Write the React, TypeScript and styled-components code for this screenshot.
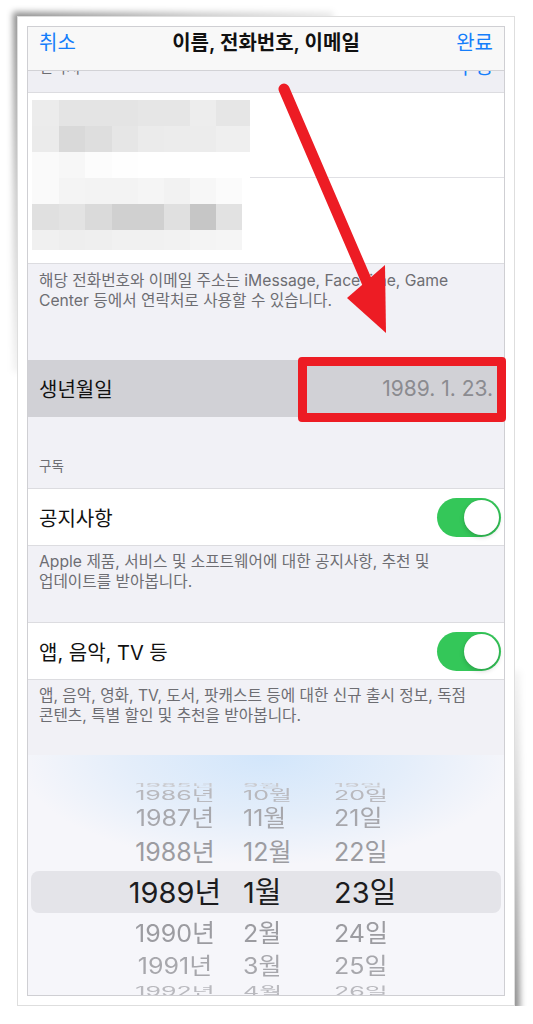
import React from 'react';
import styled, { createGlobalStyle } from 'styled-components';

const GlobalStyle = createGlobalStyle`
  html {
    background: #ffffff;
  }
  body {
    margin: 0;
    padding: 0;
    font-family: Inter, "Noto Sans CJK KR", sans-serif;
    -webkit-font-smoothing: antialiased;
  }
`;

const MOSAIC: string[][] = [
  ['#ececec', '#e4e4e4', '#e4e4e4', '#e4e4e4', '#e6e6e6', '#e6e6e6', '#ededed', '#e6e6e6'],
  ['#ebebeb', '#d9d9d9', '#dedede', '#e6e6e6', '#ebebeb', '#ececec', '#ececec', '#efefef'],
  ['#fafafa', '#f7f7f7', '#fcfcfc', '#fefefe', '#ffffff', '#ffffff', '#ffffff', '#ffffff'],
  ['#fafafa', '#f4f4f4', '#f3f3f3', '#f3f3f3', '#f5f5f5', '#f2f2f2', '#f7f7f7', '#fbfbfb'],
  ['#e0e0e0', '#e3e3e3', '#dadada', '#d0d0d0', '#d0d0d0', '#e0e0e0', '#c6c6c6', '#e2e2e2'],
  ['#f0f0f0', '#eeeeee', '#efefef', '#f1f1f1', '#f1f1f1', '#f2f2f2', '#f4f4f4', '#f5f5f5'],
];
const COL_X = [0, 27, 53, 80, 106, 132, 158, 184];
const ROW_Y = [0, 26, 52, 78, 104, 130];
const ROW_H = [26, 26, 26, 26, 26, 20];

interface WheelItem {
  year: string;
  month: string;
  day: string;
  h: number;
  sy: number;
  color: string;
  selected?: boolean;
}

const WHEEL: WheelItem[] = [
  { year: '1985년', month: '9월', day: '19일', h: 10, sy: 0.18, color: '#cacace' },
  { year: '1986년', month: '10월', day: '20일', h: 21, sy: 0.55, color: '#b9b9be' },
  { year: '1987년', month: '11월', day: '21일', h: 29, sy: 0.9, color: '#a7a7ac' },
  { year: '1988년', month: '12월', day: '22일', h: 38, sy: 1.0, color: '#9c9ca1' },
  { year: '1989년', month: '1월', day: '23일', h: 42, sy: 1.0, color: '#1c1c1e', selected: true },
  { year: '1990년', month: '2월', day: '24일', h: 40, sy: 0.98, color: '#9c9ca1' },
  { year: '1991년', month: '3월', day: '25일', h: 26, sy: 0.9, color: '#a7a7ac' },
  { year: '1992년', month: '4월', day: '26일', h: 22, sy: 0.5, color: '#b9b9be' },
];

const Mosaic = () => (
  <MosaicSvg width="218" height="150" viewBox="0 0 218 150">
    {MOSAIC.map((row, r) =>
      row.map((fill, c) => {
        const w = c === 7 ? (r < 3 ? 34 : 26) : COL_X[c + 1] - COL_X[c];
        return (
          <rect
            key={`${r}-${c}`}
            x={COL_X[c]}
            y={ROW_Y[r]}
            width={w}
            height={ROW_H[r]}
            fill={fill}
          />
        );
      })
    )}
  </MosaicSvg>
);

const Arrow = () => (
  <ArrowSvg viewBox="0 0 498 990" width="498" height="990">
    <line
      x1="266"
      y1="72"
      x2="352"
      y2="272"
      stroke="#ed1c24"
      strokeWidth="11"
      strokeLinecap="round"
    />
    <polygon points="329,281 367,248 368,316" fill="#ed1c24" />
  </ArrowSvg>
);

const App = () => {
  return (
    <>
      <GlobalStyle />
      <Page>
        <Card>
          <Screen>
            <NavBar>
              <NavButton>취소</NavButton>
              <NavTitle>이름, 전화번호, 이메일</NavTitle>
              <NavButton $right>완료</NavButton>
            </NavBar>
            <HiddenHeader>
              <HiddenLabel>연락처</HiddenLabel>
              <HiddenAction>수정</HiddenAction>
            </HiddenHeader>
            <ContactGroup>
              <ContactCell />
              <ContactCell $last />
              <Mosaic />
            </ContactGroup>
            <Footer $pt={7} $pb={49}>
              해당 전화번호와 이메일 주소는 iMessage, FaceTime, Game
              <br />
              Center 등에서 연락처로 사용할 수 있습니다.
            </Footer>
            <DateRow>
              <Label>생년월일</Label>
              <Value>1989. 1. 23.</Value>
            </DateRow>
            <SectionHeader>구독</SectionHeader>
            <Group>
              <SwitchCell>
                <Label>공지사항</Label>
                <Toggle>
                  <Knob />
                </Toggle>
              </SwitchCell>
            </Group>
            <Footer $pt={6} $pb={30}>
              Apple 제품, 서비스 및 소프트웨어에 대한 공지사항, 추천 및
              <br />
              업데이트를 받아봅니다.
            </Footer>
            <Group>
              <SwitchCell>
                <Label>앱, 음악, TV 등</Label>
                <Toggle>
                  <Knob />
                </Toggle>
              </SwitchCell>
            </Group>
            <Footer $pt={6} $pb={0}>
              앱, 음악, 영화, TV, 도서, 팟캐스트 등에 대한 신규 출시 정보, 독점
              <br />
              콘텐츠, 특별 할인 및 추천을 받아봅니다.
            </Footer>
            <Picker>
              {WHEEL.map((item) => (
                <WheelRow key={item.year} $h={item.h} $selected={item.selected}>
                  <span />
                  <WheelText
                    $center
                    $selected={item.selected}
                    style={{ color: item.color, transform: `scaleY(${item.sy})` }}
                  >
                    {item.year}
                  </WheelText>
                  <WheelText
                    $pad
                    $selected={item.selected}
                    style={{ color: item.color, transform: `scaleY(${item.sy})` }}
                  >
                    {item.month}
                  </WheelText>
                  <WheelText
                    $selected={item.selected}
                    style={{ color: item.color, transform: `scaleY(${item.sy})` }}
                  >
                    {item.day}
                  </WheelText>
                </WheelRow>
              ))}
            </Picker>
          </Screen>
          <RedBox />
          <Arrow />
        </Card>
      </Page>
    </>
  );
};

export default App;

const Page = styled.div`
  position: relative;
  z-index: 0;
  padding: 16px 0 0 17px;
`;

const Card = styled.div`
  position: relative;
  box-sizing: border-box;
  width: 498px;
  height: 990px;
  padding: 9px;
  border: 1px solid #dedede;
  background: #ffffff;

  &::before {
    content: '';
    position: absolute;
    top: -5px;
    left: -5px;
    width: 320px;
    height: 360px;
    background: linear-gradient(
      135deg,
      rgba(0, 0, 0, 0.45) 0%,
      rgba(0, 0, 0, 0.2) 28%,
      rgba(0, 0, 0, 0) 62%
    );
    filter: blur(3px);
    z-index: -1;
  }

  &::after {
    content: '';
    position: absolute;
    right: -6px;
    bottom: -6px;
    width: 290px;
    height: 340px;
    background: linear-gradient(
      315deg,
      rgba(0, 0, 0, 0.45) 0%,
      rgba(0, 0, 0, 0.2) 28%,
      rgba(0, 0, 0, 0) 62%
    );
    filter: blur(3px);
    z-index: -1;
  }
`;

const Screen = styled.div`
  box-sizing: border-box;
  height: 100%;
  display: flex;
  flex-direction: column;
  border: 1px solid #cfcfd3;
  background: #f1f1f6;
  overflow: hidden;
`;

const NavBar = styled.div`
  flex: none;
  height: 44px;
  display: grid;
  grid-template-columns: 1fr auto 1fr;
  align-items: start;
  padding: 3px 11px 0;
  box-sizing: border-box;
  background: #f8f8f8;
  border-bottom: 1px solid #d2d2d6;
`;

const NavButton = styled.div<{ $right?: boolean }>`
  font-size: 20px;
  line-height: 26px;
  color: #157efb;
  text-align: ${(p) => (p.$right ? 'right' : 'left')};
`;

const NavTitle = styled.div`
  font-size: 20px;
  line-height: 26px;
  font-weight: 600;
  color: #111111;
`;

const HiddenHeader = styled.div`
  flex: none;
  height: 21px;
  display: flex;
  justify-content: space-between;
  align-items: flex-start;
  padding: 0 11px;
  overflow: hidden;
  background: #efeff4;
`;

const HiddenLabel = styled.span`
  margin-top: -12px;
  font-size: 15px;
  line-height: 18px;
  color: #6d6d72;
`;

const HiddenAction = styled.span`
  margin-top: -16px;
  font-size: 20px;
  line-height: 24px;
  color: #157efb;
`;

const ContactGroup = styled.div`
  position: relative;
  flex: none;
  background: #ffffff;
  border-top: 1px solid #dcdce0;
  border-bottom: 1px solid #dcdce0;
`;

const ContactCell = styled.div<{ $last?: boolean }>`
  height: ${(p) => (p.$last ? 85 : 84)}px;
  margin-left: ${(p) => (p.$last ? 0 : 11)}px;
  border-bottom: ${(p) => (p.$last ? 'none' : '1px solid #e0e0e4')};
`;

const MosaicSvg = styled.svg`
  position: absolute;
  top: 7px;
  left: 4px;
`;

const Footer = styled.div<{ $pt: number; $pb: number }>`
  flex: none;
  padding: ${(p) => p.$pt}px 11px ${(p) => p.$pb}px;
  font-size: 15.7px;
  line-height: 20px;
  white-space: nowrap;
  color: #6d6d72;
`;

const Label = styled.span`
  font-size: 20px;
  color: #111111;
`;

const Value = styled.span`
  font-size: 21px;
  color: #8b8b90;
`;

const DateRow = styled.div`
  flex: none;
  height: 57px;
  display: flex;
  align-items: center;
  justify-content: space-between;
  padding: 0 11px;
  background: #d1d1d6;
`;

const SectionHeader = styled.div`
  flex: none;
  padding: 41px 11px 14px;
  font-size: 13.5px;
  line-height: 16px;
  color: #6d6d72;
`;

const Group = styled.div`
  flex: none;
  background: #ffffff;
  border-top: 1px solid #dcdce0;
  border-bottom: 1px solid #dcdce0;
`;

const SwitchCell = styled.div`
  height: 56px;
  display: flex;
  align-items: center;
  justify-content: space-between;
  padding: 0 3px 0 11px;
`;

const Toggle = styled.div`
  box-sizing: border-box;
  width: 64px;
  height: 39px;
  padding: 2px;
  display: flex;
  justify-content: flex-end;
  border-radius: 20px;
  background: #34c759;
`;

const Knob = styled.div`
  width: 35px;
  height: 35px;
  border-radius: 50%;
  background: #ffffff;
  box-shadow: 0 2px 5px rgba(0, 0, 0, 0.18), 0 0 1px rgba(0, 0, 0, 0.15);
`;

const Picker = styled.div`
  flex: 1;
  margin-top: 29px;
  padding-top: 18px;
  overflow: hidden;
  background: radial-gradient(
      ellipse 250px 110px at 50% 0,
      rgba(208, 229, 251, 0.95) 0%,
      rgba(220, 234, 250, 0.7) 55%,
      rgba(246, 246, 250, 0) 100%
    ),
    #f6f6fa;
`;

const WheelRow = styled.div<{ $h: number; $selected?: boolean }>`
  height: ${(p) => p.$h}px;
  margin: 0 3px;
  display: grid;
  grid-template-columns: 94px 100px 109px 1fr;
  align-items: center;
  border-radius: 8px;
  background: ${(p) => (p.$selected ? '#e4e4e9' : 'transparent')};
`;

const WheelText = styled.span<{ $center?: boolean; $pad?: boolean; $selected?: boolean }>`
  display: block;
  font-size: ${(p) => (p.$selected ? 29 : 25)}px;
  line-height: 1;
  white-space: nowrap;
  text-align: ${(p) => (p.$center ? 'center' : 'left')};
  padding-left: ${(p) => (p.$pad ? 18 : 0)}px;
`;

const RedBox = styled.div`
  position: absolute;
  left: 280px;
  top: 340px;
  width: 208px;
  height: 65px;
  box-sizing: border-box;
  border: 9px solid #ed1c24;
  border-radius: 4px;
`;

const ArrowSvg = styled.svg`
  position: absolute;
  top: 0;
  left: 0;
  pointer-events: none;
`;
